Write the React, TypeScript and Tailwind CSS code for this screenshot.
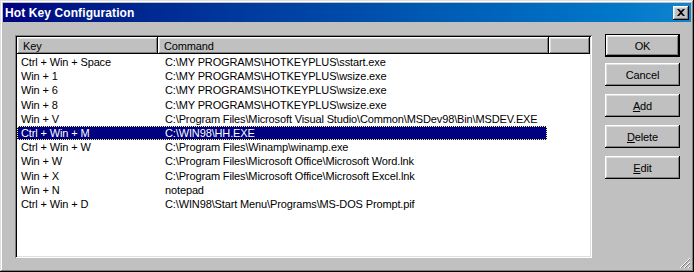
import React from "react";

const rows: [string, string][] = [
  ["Ctrl + Win + Space", "C:\\MY PROGRAMS\\HOTKEYPLUS\\sstart.exe"],
  ["Win + 1", "C:\\MY PROGRAMS\\HOTKEYPLUS\\wsize.exe"],
  ["Win + 6", "C:\\MY PROGRAMS\\HOTKEYPLUS\\wsize.exe"],
  ["Win + 8", "C:\\MY PROGRAMS\\HOTKEYPLUS\\wsize.exe"],
  ["Win + V", "C:\\Program Files\\Microsoft Visual Studio\\Common\\MSDev98\\Bin\\MSDEV.EXE"],
  ["Ctrl + Win + M", "C:\\WIN98\\HH.EXE"],
  ["Ctrl + Win + W", "C:\\Program Files\\Winamp\\winamp.exe"],
  ["Win + W", "C:\\Program Files\\Microsoft Office\\Microsoft Word.lnk"],
  ["Win + X", "C:\\Program Files\\Microsoft Office\\Microsoft Excel.lnk"],
  ["Win + N", "notepad"],
  ["Ctrl + Win + D", "C:\\WIN98\\Start Menu\\Programs\\MS-DOS Prompt.pif"],
];

const raised =
  "shadow-[inset_-1px_-1px_0_#000,inset_1px_1px_0_#fff,inset_-2px_-2px_0_#808080,inset_2px_2px_0_#dfdfdf]";

function Btn({ children, def }: { children: React.ReactNode; def?: boolean }) {
  return (
    <div
      className={`w-[75px] h-[23px] flex items-center justify-center bg-[#c0c0c0] text-black ${
        def
          ? "border border-black shadow-[inset_-1px_-1px_0_#000,inset_1px_1px_0_#fff,inset_-2px_-2px_0_#808080,inset_2px_2px_0_#dfdfdf]"
          : raised
      }`}
    >
      {children}
    </div>
  );
}

export default function App() {
  return (
    <div
      className="w-[694px] h-[272px] bg-[#c0c0c0] p-[3px] flex flex-col shadow-[inset_-1px_-1px_0_#000,inset_1px_1px_0_#dfdfdf,inset_-2px_-2px_0_#808080,inset_2px_2px_0_#fff] text-[11px] leading-[14px] text-black overflow-hidden relative"
      style={{ fontFamily: '"Liberation Sans", Arial, sans-serif' }}
    >
      {/* Title bar */}
      <div className="h-[19px] flex items-center justify-between bg-gradient-to-r from-[#000080] to-[#1084d0] pl-[2px] pr-[2px]">
        <span className="text-white font-bold text-[12px] tracking-[0.1px]">Hot Key Configuration</span>
        <div className={`w-[16px] h-[14px] bg-[#c0c0c0] flex items-center justify-center ${raised}`}>
          <svg width="8" height="7" viewBox="0 0 8 7">
            <path d="M0 0h2l2 2 2-2h2L5 3.5 8 7H6L4 5 2 7H0l3-3.5z" fill="#000" />
          </svg>
        </div>
      </div>

      {/* Body */}
      <div className="flex pl-[12px] pt-[12px] tracking-[-0.13px]">
        {/* List view */}
        <div className="w-[577px] h-[223px] mt-[1px] bg-white p-[2px] shadow-[inset_1px_1px_0_#808080,inset_-1px_-1px_0_#fff,inset_2px_2px_0_#000,inset_-2px_-2px_0_#dfdfdf] flex flex-col">
          <div className="flex h-[17px]">
            <div className={`w-[141px] h-full bg-[#c0c0c0] pl-[6px] flex items-center ${raised}`}>Key</div>
            <div className={`w-[391px] h-full bg-[#c0c0c0] pl-[6px] flex items-center ${raised}`}>Command</div>
            <div className={`flex-1 h-full bg-[#c0c0c0] ${raised}`}></div>
          </div>
          <div className="flex flex-col pt-[1px]">
            {rows.map(([k, c], i) => {
              const sel = i === 5;
              return (
                <div
                  key={i}
                  className={`flex h-[14.2px] w-[530px] items-center ${
                    sel ? "bg-[#000080] text-white outline-1 outline-dotted outline-[#ffff80] -outline-offset-1" : ""
                  }`}
                >
                  <div className="w-[141px] pl-[4px] whitespace-nowrap">{k}</div>
                  <div className="pl-[7px] whitespace-nowrap">{c}</div>
                </div>
              );
            })}
          </div>
        </div>

        {/* Buttons */}
        <div className="ml-[13px] flex flex-col">
          <Btn def>OK</Btn>
          <div className="h-[6px]" />
          <Btn>Cancel</Btn>
          <div className="h-[8px]" />
          <Btn>
            <span><u>A</u>dd</span>
          </Btn>
          <div className="h-[8px]" />
          <Btn>
            <span><u>D</u>elete</span>
          </Btn>
          <div className="h-[8px]" />
          <Btn>
            <span><u>E</u>dit</span>
          </Btn>
        </div>
      </div>

      {/* Resize grip */}
      <svg className="absolute right-[3px] bottom-[3px]" width="12" height="12" viewBox="0 0 12 12">
        <path d="M11 1L1 11M11 5L5 11M11 9L9 11" stroke="#fff" strokeWidth="1" />
        <path d="M11 2L2 11M11 6L6 11M11 10L10 11" stroke="#808080" strokeWidth="1" />
      </svg>
    </div>
  );
}
